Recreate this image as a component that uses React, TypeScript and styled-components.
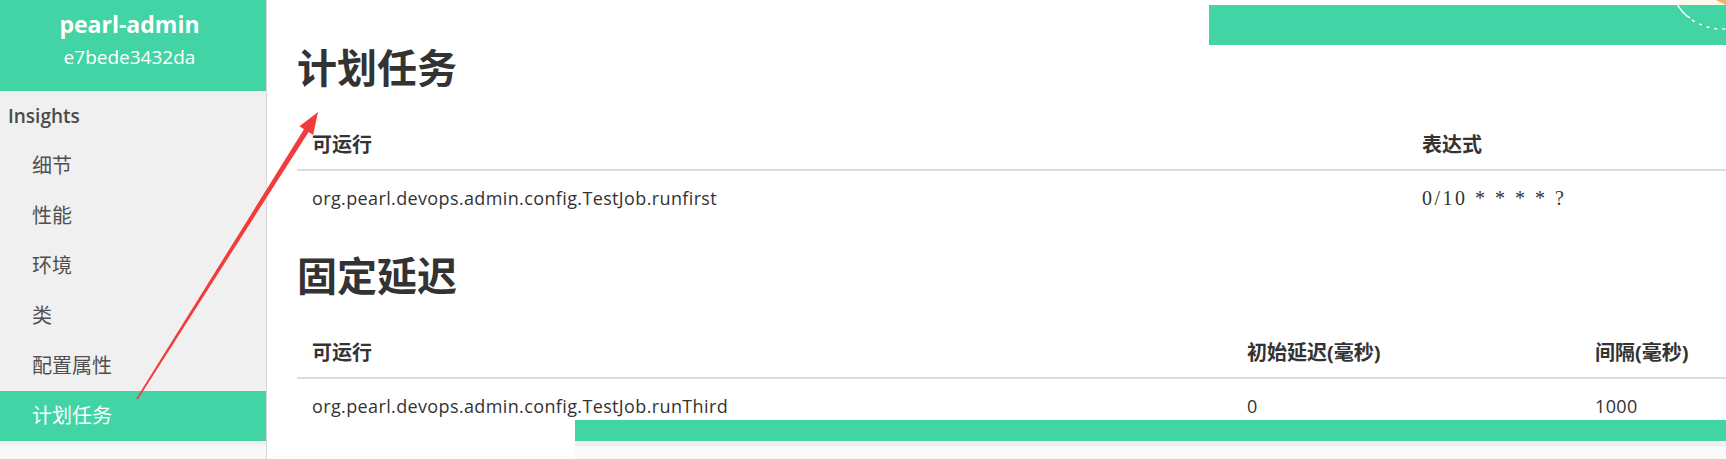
import styled, { createGlobalStyle } from "styled-components";

const GREEN = "#42d4a5";

const GlobalStyle = createGlobalStyle`
  html, body {
    margin: 0;
    padding: 0;
  }
  body {
    width: 1726px;
    height: 459px;
    overflow: hidden;
    background: #fff;
    font-family: "Open Sans", "Noto Sans CJK SC", sans-serif;
    color: #333;
  }
`;

const Page = styled.div`
  position: relative;
  display: flex;
  width: 1726px;
  height: 459px;
  overflow: hidden;
`;

const Sidebar = styled.aside`
  flex: none;
  width: 267px;
  box-sizing: border-box;
  display: flex;
  flex-direction: column;
  background: #f0f0f0;
  border-right: 1px solid #dadada;
`;

const Brand = styled.div`
  height: 91px;
  box-sizing: border-box;
  padding: 9px 7px 0 0;
  background: ${GREEN};
  color: #fff;
  text-align: center;
`;

const BrandName = styled.div`
  font-size: 23px;
  font-weight: 700;
  line-height: 30px;
`;

const BrandId = styled.div`
  margin-top: 5px;
  font-size: 19px;
  line-height: 26px;
`;

const Nav = styled.nav`
  display: flex;
  flex-direction: column;
  padding-bottom: 4px;
`;

const NavGroup = styled.div`
  height: 50px;
  padding-left: 8px;
  font-size: 19px;
  font-weight: 600;
  line-height: 50px;
  color: #4a4a4a;
`;

const NavItem = styled.a<{ $active?: boolean }>`
  display: block;
  height: 50px;
  padding-left: 32px;
  font-size: 20px;
  line-height: 50px;
  text-decoration: none;
  color: ${({ $active }) => ($active ? "#fff" : "#505050")};
  background: ${({ $active }) => ($active ? GREEN : "transparent")};
`;

const SidebarFoot = styled.div`
  flex: 1;
  background: #f8f8f8;
`;

const Main = styled.main`
  flex: 1;
  min-width: 0;
  padding: 17px 0 0 30px;
`;

const Title = styled.h2`
  margin: 27px 0 26px;
  font-size: 40px;
  font-weight: 700;
  line-height: 48px;
  color: #333;
`;

const Table = styled.table`
  width: 100%;
  table-layout: fixed;
  border-collapse: collapse;
`;

const Th = styled.th`
  padding: 12px 15px 9px;
  font-size: 20px;
  font-weight: 700;
  line-height: 30px;
  text-align: left;
  white-space: nowrap;
  border-bottom: 2px solid #dcdcdc;
`;

const Td = styled.td<{ $expr?: boolean }>`
  padding: 12px 15px;
  font-size: 18px;
  letter-spacing: 0.37px;
  line-height: 30px;
  white-space: nowrap;
  color: #333;
  ${({ $expr }) =>
    $expr &&
    `
    font-family: "Liberation Serif", serif;
    font-size: 20px;
    letter-spacing: 2.5px;
  `}
`;

const TopStrip = styled.div`
  position: absolute;
  top: 5px;
  left: 1209px;
  right: 0;
  height: 40px;
  background: ${GREEN};
`;

const BottomDock = styled.div`
  position: absolute;
  top: 420px;
  left: 575px;
  right: 0;
  bottom: 0;
  display: flex;
  flex-direction: column;
  background: #f9f9f9;
`;

const DockBar = styled.div`
  height: 21px;
  background: ${GREEN};
  border-bottom: 5px solid #efefef;
`;

const Overlay = styled.svg`
  position: absolute;
  top: 0;
  left: 0;
  pointer-events: none;
`;

const menu = ["细节", "性能", "环境", "类", "配置属性", "计划任务"];

export default function App() {
  return (
    <>
      <GlobalStyle />
      <Page>
        <Sidebar>
          <Brand>
            <BrandName>pearl-admin</BrandName>
            <BrandId>e7bede3432da</BrandId>
          </Brand>
          <Nav>
            <NavGroup>Insights</NavGroup>
            {menu.map((m) => (
              <NavItem key={m} $active={m === "计划任务"}>
                {m}
              </NavItem>
            ))}
          </Nav>
          <SidebarFoot />
        </Sidebar>

        <Main>
          <Title>计划任务</Title>
          <Table>
            <colgroup>
              <col style={{ width: 1110 }} />
              <col />
            </colgroup>
            <thead>
              <tr>
                <Th>可运行</Th>
                <Th>表达式</Th>
              </tr>
            </thead>
            <tbody>
              <tr>
                <Td>org.pearl.devops.admin.config.TestJob.runfirst</Td>
                <Td $expr>0/10 * * * * ?</Td>
              </tr>
            </tbody>
          </Table>

          <Title>固定延迟</Title>
          <Table>
            <colgroup>
              <col style={{ width: 935 }} />
              <col style={{ width: 348 }} />
              <col />
            </colgroup>
            <thead>
              <tr>
                <Th>可运行</Th>
                <Th>初始延迟(毫秒)</Th>
                <Th>间隔(毫秒)</Th>
              </tr>
            </thead>
            <tbody>
              <tr>
                <Td>org.pearl.devops.admin.config.TestJob.runThird</Td>
                <Td>0</Td>
                <Td>1000</Td>
              </tr>
            </tbody>
          </Table>
        </Main>

        <TopStrip />
        <BottomDock>
          <DockBar />
        </BottomDock>

        <Overlay width="1726" height="459" viewBox="0 0 1726 459">
          {/* corner of a floating widget */}
          <rect x="1680" y="0" width="46" height="5" fill="#fdf8ec" />
          <path d="M1716 0 L1726 0 L1726 5 Z" fill="#f0b45a" />
          <path
            d="M1675 0 Q1682 14 1690 18"
            fill="none"
            stroke="#fff"
            strokeWidth="1.5"
          />
          <path
            d="M1692 20 Q1708 30 1726 29"
            fill="none"
            stroke="#fff"
            strokeWidth="1.5"
            strokeDasharray="3 5"
          />
          {/* annotation arrow */}
          <polygon
            points="318,112 313.1,134.9 308.6,131.9 137.7,399.4 136.3,398.6 304,129.3 299.5,126.3"
            fill="#f23b3b"
          />
        </Overlay>
      </Page>
    </>
  );
}
